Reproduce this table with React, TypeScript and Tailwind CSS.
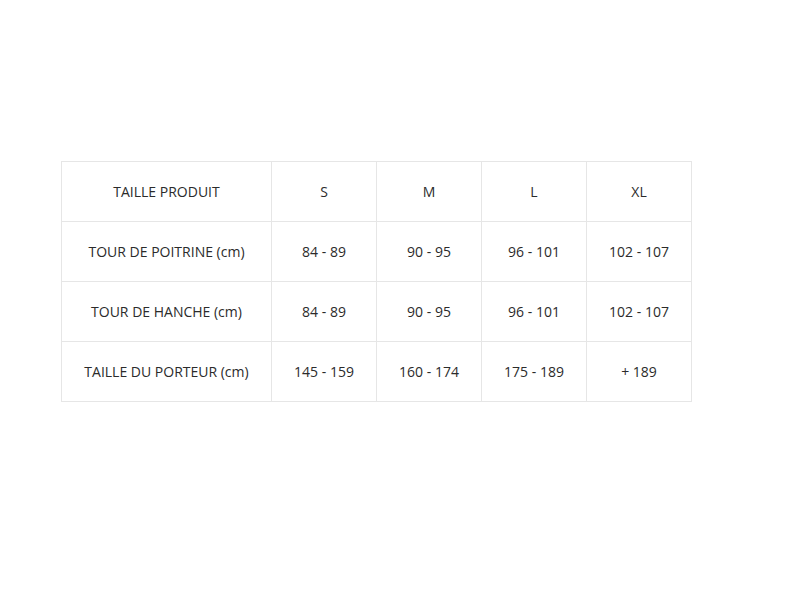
import React from 'react';

const header = ['TAILLE PRODUIT', 'S', 'M', 'L', 'XL'];

const rows: string[][] = [
  ['TOUR DE POITRINE (cm)', '84 - 89', '90 - 95', '96 - 101', '102 - 107'],
  ['TOUR DE HANCHE (cm)', '84 - 89', '90 - 95', '96 - 101', '102 - 107'],
  ['TAILLE DU PORTEUR (cm)', '145 - 159', '160 - 174', '175 - 189', '+ 189'],
];

export default function App() {
  const all = [header, ...rows];
  return (
    <div className="w-[800px] h-[600px] bg-white pt-[161px] pl-[61px] font-['Open_Sans','Lato',sans-serif] text-[14px] text-[#2b2b2b]">
      <table className="border-collapse">
        <tbody>
          {all.map((row, r) => (
            <tr key={r} className="h-[60px]">
              {row.map((cell, c) => (
                <td
                  key={c}
                  className={`border border-[#e6e6e6] text-center align-middle p-0 ${c === 0 ? 'w-[210px]' : 'w-[105px]'}`}
                >
                  {cell}
                </td>
              ))}
            </tr>
          ))}
        </tbody>
      </table>
    </div>
  );
}
